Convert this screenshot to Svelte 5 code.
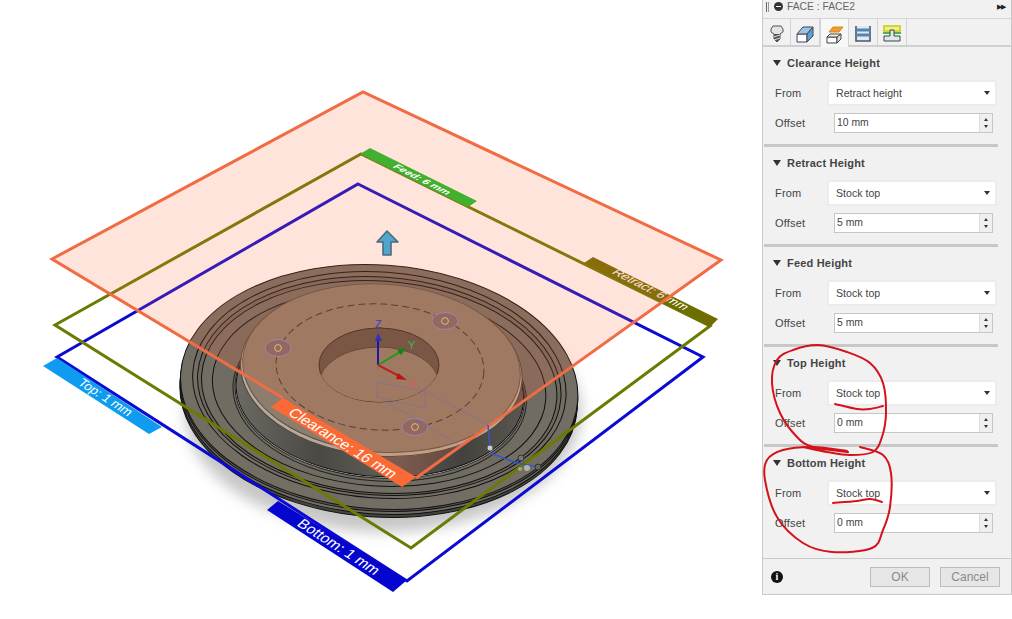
<script lang="ts">
  const sections = [
    { title: 'Clearance Height', from: 'Retract height', offset: '10 mm' },
    { title: 'Retract Height', from: 'Stock top', offset: '5 mm' },
    { title: 'Feed Height', from: 'Stock top', offset: '5 mm' },
    { title: 'Top Height', from: 'Stock top', offset: '0 mm' },
    { title: 'Bottom Height', from: 'Stock top', offset: '0 mm' }
  ]

  // flange + groove ellipses, back to front
  const rings = [
    { cy: 396, rx: 199, ry: 121, fill: '#46443e' },
    { cy: 393, rx: 199, ry: 121, fill: '#6f6c63' },
    { cy: 390, rx: 199, ry: 121, fill: '#5a5750' },
    { cy: 387, rx: 199, ry: 122, fill: '#726e64' },
    { cy: 385, rx: 187, ry: 113, fill: '#726e64' },
    { cy: 386, rx: 182, ry: 109, fill: '#6c685e' },
    { cy: 387, rx: 178, ry: 106, fill: '#726e64' },
    { cy: 388, rx: 167, ry: 98, fill: '#706c62' }
  ]

  const bolts = [
    { x: 278, y: 348 },
    { x: 445, y: 321 },
    { x: 415, y: 427 }
  ]

  // catmull-rom through the hand drawn points
  const smooth = (p: number[][]) => {
    let d = `M${p[0][0]} ${p[0][1]}`
    for (let i = 0; i < p.length - 1; i++) {
      const a = p[i - 1] || p[i]
      const b = p[i]
      const c = p[i + 1]
      const e = p[i + 2] || c
      const c1 = [b[0] + (c[0] - a[0]) / 6, b[1] + (c[1] - a[1]) / 6]
      const c2 = [c[0] - (e[0] - b[0]) / 6, c[1] - (e[1] - b[1]) / 6]
      d += `C${c1[0]} ${c1[1]} ${c2[0]} ${c2[1]} ${c[0]} ${c[1]}`
    }
    return d
  }

  const scribbles = [
    [[848,452],[813,447],[797,437],[780,413],[772,383],[777,360],[793,350],[818,345],[847,352],[870,363],[883,383],[886,413],[882,437],[873,452],[850,455],[827,452],[803,447]],
    [[860,447],[883,455],[891,473],[890,507],[883,530],[872,548],[832,552],[803,543],[777,517],[765,480],[767,460],[783,450],[813,447],[847,451]],
    [[835,404],[857,409],[870,409],[883,406]],
    [[833,503],[857,501],[870,499],[882,502]]
  ].map(smooth)
</script>

<div class="page">
  <svg class="view" viewBox="0 0 762 619" width="762" height="619">
    <defs>
      <filter id="soft" x="-20%" y="-20%" width="140%" height="140%">
        <feGaussianBlur stdDeviation="7" />
      </filter>
      <linearGradient id="neck" x1="0" x2="1" y1="0" y2="0">
        <stop offset="0" stop-color="#6c6a62" />
        <stop offset="0.3" stop-color="#4a4945" />
        <stop offset="0.55" stop-color="#5f5d56" />
        <stop offset="0.8" stop-color="#44423e" />
        <stop offset="1" stop-color="#5a574f" />
      </linearGradient>
      <clipPath id="hole-clip"><ellipse cx="379" cy="365" rx="60" ry="37" /></clipPath>
    </defs>

    <!-- disc -->
    <ellipse cx="383" cy="412" rx="198" ry="120" fill="#c6c6c6" filter="url(#soft)" />
    <g transform="rotate(4 379 390)" stroke="#111" stroke-width="1">
      {#each rings as r}
        <ellipse cx="379" cy={r.cy} rx={r.rx} ry={r.ry} fill={r.fill} />
      {/each}
      <ellipse cx="380" cy="394" rx="147" ry="87" fill="#706c62" stroke="#222" />
      <ellipse cx="380" cy="393" rx="145" ry="85" fill="#d8d4cc" stroke="#222" />
      <ellipse cx="380" cy="392" rx="144" ry="84.5" fill="url(#neck)" />
      <ellipse cx="380" cy="371" rx="141" ry="85" fill="#b5a999" stroke="#4c453b" />
      <ellipse cx="380" cy="368" rx="139" ry="84" fill="#8c7d6c" stroke="#5c5448" />
    </g>

    <ellipse cx="380" cy="367" rx="104" ry="63" transform="rotate(3 380 367)" fill="none" stroke="#3d342c" stroke-width="1" stroke-dasharray="7 4" />

    <ellipse cx="379" cy="365" rx="60" ry="37" fill="#5d5346" stroke="#332a22" />
    <ellipse cx="379" cy="384" rx="60" ry="37" fill="#8c7d6c" stroke="#4a4036" clip-path="url(#hole-clip)" />

    {#each bolts as b}
      <ellipse cx={b.x} cy={b.y} rx="13" ry="8.5" fill="#7a6a68" stroke="#8f8ac4" />
      <circle cx={b.x} cy={b.y} r="3.4" fill="none" stroke="#e6c58c" />
    {/each}

    <!-- bottom plane -->
    <polygon points="358,184 703,357 407,581 57,357" fill="none" stroke="#0a0ad2" stroke-width="3" />
    <polygon points="57,358 43,366 149,434 162,427" fill="#0f9cf0" />
    <text class="tag" transform="matrix(.84 .54 -.72 .68 77 384)" font-size="13">Top: 1 mm</text>
    <polygon points="278,501 267,510 393,592 407,580" fill="#0505d0" />
    <text class="tag" transform="matrix(.84 .54 -.72 .68 296 525)" font-size="15">Bottom: 1 mm</text>

    <!-- middle plane -->
    <polygon points="361,154 710,326 411,548 55,325" fill="none" stroke="#6b7a00" stroke-width="3" />
    <polygon points="593,257 584,263 710,327 718,319" fill="#6e6e00" />
    <text class="tag" transform="matrix(.89 .46 -.8 .5 611 273)" font-size="13">Retract: 6 mm</text>

    <!-- top plane -->
    <polygon points="363,92 721,260 416,478 52,259" fill="#ff6a3d" fill-opacity=".18" />
    <polyline points="283,398 52,259 363,92 721,260 416,478" fill="none" stroke="#f06c44" stroke-width="3" />
    <polygon points="283,398 271,407 402,487 416,477" fill="#fb6a35" />
    <text class="tag" transform="matrix(.85 .53 -.75 .66 287 414)" font-size="15">Clearance: 16 mm</text>

    <polygon points="370,148 360,154 468,207 477,201" fill="#41b02e" />
    <text class="tag bold" transform="matrix(.89 .46 -.8 .4 392 167)" font-size="11">Feed: 6 mm</text>

    <!-- gizmos -->
    <path d="M387 231 L398 242 L391 242 L391 255 L383 255 L383 242 L377 242 Z" fill="#4ea6cc" stroke="#4c6a7a" stroke-width="1.6" stroke-linejoin="round" />

    <g fill="none" stroke="#6468c8" stroke-width="1" opacity=".4">
      <path d="M377 382 L427 392 L488 425" />
      <path d="M377 382 L377 397 L425 408 L425 393" />
      <path d="M383 400 L463 447" />
    </g>
    <path d="M488 425 L490 447 M490 453 L517 463 L538 467" fill="none" stroke="#3a55c8" stroke-width="1.5" />
    <circle cx="490" cy="448" r="3" fill="#ccc" stroke="#555" />
    <circle cx="521" cy="458" r="3" fill="#777" stroke="#333" />
    <circle cx="527" cy="468" r="3" fill="#b5b1a6" />
    <circle cx="520" cy="469" r="2" fill="#a5a196" />
    <circle cx="538" cy="467" r="3" fill="#666" stroke="#333" />

    <g stroke-width="2" fill="none">
      <path d="M378 365 L378 340" stroke="#1a1aa0" />
      <path d="M378 365 L400 352" stroke="#12a012" />
      <path d="M378 365 L401 377" stroke="#c02020" />
    </g>
    <path d="M378 333 L382 341 L375 341 Z" fill="#3030c0" />
    <path d="M406 348 L397 350 L401 355 Z" fill="#0c8a0c" />
    <path d="M407 380 L398 373 L396 379 Z" fill="#b81414" />
    <text class="axis" x="375" y="328" fill="#3c3cc0">Z</text>
    <text class="axis" x="408" y="349" fill="#4cae5c">Y</text>
    <text class="axis" x="409" y="388" fill="#d85a5a">X</text>
  </svg>

  <aside class="panel">
    <header class="title">
      <span class="grip"></span>
      <span class="stop"></span>
      <span class="name">FACE : FACE2</span>
      <span class="more">▶▶</span>
    </header>

    <nav class="tabs">
      <button class="tabbtn" aria-label="Tool">
        <svg viewBox="0 0 14 18" width="14" height="18">
          <path d="M3 1 H11 L13 4 V7 L10 9 V14 L7 17 L4 14 V9 L1 7 V4 Z" fill="#e4e4e4" stroke="#555" stroke-linejoin="round" />
          <path d="M4 9 H10 V14 L7 17 L4 14 Z" fill="#555" />
          <path d="M4 12 L10 10 M4 15 L10 13" stroke="#ddd" />
        </svg>
      </button>
      <button class="tabbtn" aria-label="Geometry">
        <svg viewBox="0 0 18 18" width="18" height="18">
          <path d="M1 9 H11 V17 H1 Z" fill="#fff" stroke="#445" />
          <path d="M1 9 L7 2 H17 L11 9 Z" fill="#9cc4e6" stroke="#445" />
          <path d="M11 9 L17 2 V11 L11 17 Z" fill="#5f9fd2" stroke="#445" />
        </svg>
      </button>
      <button class="tabbtn on" aria-label="Heights">
        <svg viewBox="0 0 18 18" width="18" height="18">
          <path d="M1 11 H11 V17 H1 Z" fill="#fff" stroke="#444" />
          <path d="M1 11 L4 8 H15 L11 11 Z" fill="#f0f0f0" stroke="#444" />
          <path d="M11 11 L15 8 V13 L11 17 Z" fill="#ddd" stroke="#444" />
          <path d="M3 6 L7 1 H17 L13 6 Z" fill="#ef9a32" stroke="#d98a20" />
        </svg>
      </button>
      <button class="tabbtn" aria-label="Passes">
        <svg viewBox="0 0 18 18" width="18" height="18">
          <path d="M2 1 V16 H16 V1" fill="#e4e8ec" stroke="#4a5568" stroke-width="1.6" />
          <path d="M2 5 H16 M2 10 H16" stroke="#4e86b8" stroke-width="3" />
        </svg>
      </button>
      <button class="tabbtn" aria-label="Linking">
        <svg viewBox="0 0 18 18" width="18" height="18">
          <rect x="1" y="1" width="16" height="5" fill="#eef08a" stroke="#d6d23a" stroke-width="2" />
          <path d="M0 8 H18" stroke="#5cae4c" stroke-width="2" />
          <path d="M7 5 H11 V11 H17 V16 H1 V11 H7 Z" fill="#dfe9e6" stroke="#33484e" />
        </svg>
      </button>
      <span class="tabfill"></span>
    </nav>

    {#each sections as s, i}
      <section class="group" class:last={i === sections.length - 1}>
        <h4><span class="caret"></span>{s.title}</h4>
        <div class="row from">
          <label for={`from-${i}`}>From</label>
          <div class="select" id={`from-${i}`}><span>{s.from}</span><i></i></div>
        </div>
        <div class="row">
          <label for={`off-${i}`}>Offset</label>
          <div class="input" id={`off-${i}`}>
            <span>{s.offset}</span>
            <div class="spin"><b></b><b class="down"></b></div>
          </div>
        </div>
      </section>
    {/each}

    <footer class="foot">
      <span class="info">i</span>
      <button class="btn">OK</button>
      <button class="btn">Cancel</button>
    </footer>

    <svg class="marks" viewBox="762 0 250 595" width="250" height="595">
      {#each scribbles as d}
        <path {d} fill="none" stroke="#d4121c" stroke-width="2" stroke-linecap="round" />
      {/each}
    </svg>
  </aside>
</div>

<style>
  :global(body) {
    background: #fff;
    font-family: "Liberation Sans", Arial, sans-serif;
  }

  .page {
    display: flex;
    align-items: flex-start;
    width: 1012px;
    height: 619px;
    overflow: hidden;
  }

  .view {
    display: block;
    flex: none;
  }

  .tag {
    fill: #fff;
    font-family: "Liberation Sans", Arial, sans-serif;
  }

  .bold {
    font-weight: bold;
  }

  .axis {
    font-family: "Liberation Sans", Arial, sans-serif;
    font-size: 11px;
  }

  .panel {
    position: relative;
    flex: none;
    box-sizing: border-box;
    width: 250px;
    height: 595px;
    background: #f1f1f1;
    border: 1px solid #c9c9c9;
    border-top: 0;
    color: #444;
    font-size: 11px;
    display: flex;
    flex-direction: column;
  }

  .title {
    box-sizing: border-box;
    display: flex;
    align-items: center;
    height: 19px;
    padding: 0 4px 5px 0;
    border-bottom: 1px solid #d4d4d4;
    color: #666;
  }

  .grip {
    width: 1px;
    height: 10px;
    margin-left: 3px;
    background: #666;
    box-shadow: 2px 0 0 #999;
  }

  .stop {
    position: relative;
    width: 9px;
    height: 9px;
    margin-left: 7px;
    border-radius: 50%;
    background: #333;
  }

  .stop::after {
    content: "";
    position: absolute;
    left: 2px;
    right: 2px;
    top: 4px;
    height: 1px;
    background: #fff;
  }

  .name {
    margin-left: 4px;
    flex: 1;
    font-size: 10.3px;
  }

  .more {
    color: #222;
    font-size: 7px;
    letter-spacing: -1px;
    margin-right: 2px;
  }

  .tabs {
    box-sizing: border-box;
    display: flex;
    align-items: stretch;
    height: 28px;
    border-bottom: 2px solid #d0d0d0;
  }

  .tabbtn {
    display: flex;
    align-items: center;
    justify-content: center;
    width: 29px;
    padding: 3px 0 0;
    background: #f1f1f1;
    border: 0;
    border-right: 1px solid #d4d4d4;
  }

  .tabbtn:first-child {
    width: 28px;
  }

  .tabbtn.on {
    background: #f8f8f8;
    border-left: 1px solid #d4d4d4;
    margin-bottom: -2px;
  }

  .tabfill {
    flex: 1;
  }

  .group {
    box-sizing: border-box;
    flex: none;
    height: 100px;
    margin: 0 13px 0 1px;
    padding-top: 8px;
    border-bottom: 3px solid #c8c8c8;
  }

  .group.last {
    border-bottom: 0;
  }

  h4 {
    display: flex;
    align-items: center;
    height: 16px;
    margin: 0 0 9px;
    padding-left: 9px;
    font-size: 11px;
    letter-spacing: .2px;
    font-weight: bold;
    color: #444;
  }

  .caret {
    width: 0;
    height: 0;
    margin-right: 6px;
    border-left: 4.5px solid transparent;
    border-right: 4.5px solid transparent;
    border-top: 6px solid #333;
  }

  .row {
    display: flex;
    align-items: center;
    height: 29px;
    padding-left: 11px;
  }

  .row label {
    width: 52px;
    letter-spacing: .2px;
  }

  .from {
    height: 26px;
    margin-bottom: 2px;
  }

  .select {
    box-sizing: border-box;
    display: flex;
    align-items: center;
    justify-content: space-between;
    width: 170px;
    height: 26px;
    padding: 0 5px 0 7px;
    background: #fff;
    border: 2px solid #ececec;
    font-size: 10.6px;
  }

  .select i {
    width: 0;
    height: 0;
    border-left: 3px solid transparent;
    border-right: 3px solid transparent;
    border-top: 4px solid #333;
  }

  .input {
    box-sizing: border-box;
    display: flex;
    align-items: center;
    justify-content: space-between;
    width: 159px;
    height: 20px;
    margin-left: 7px;
    padding-left: 2px;
    background: #fff;
    border: 1px solid #c6c6c6;
    font-size: 10.4px;
  }

  .spin {
    display: flex;
    flex-direction: column;
    align-items: center;
    justify-content: space-evenly;
    width: 12px;
    height: 18px;
    background: #efefef;
    border-left: 1px solid #ddd;
  }

  .spin b {
    width: 0;
    height: 0;
    border-left: 2.5px solid transparent;
    border-right: 2.5px solid transparent;
    border-bottom: 3px solid #333;
  }

  .spin b.down {
    border-bottom: 0;
    border-top: 3px solid #333;
  }

  .foot {
    display: flex;
    align-items: center;
    box-sizing: border-box;
    height: 36px;
    margin-top: auto;
    padding: 0 11px 0 8px;
    border-top: 1px solid #c9c9c9;
  }

  .info {
    width: 12px;
    height: 12px;
    margin-right: auto;
    border-radius: 50%;
    background: #111;
    color: #fff;
    font: bold 10px/12px "Liberation Serif", serif;
    text-align: center;
  }

  .btn {
    box-sizing: border-box;
    width: 60px;
    height: 20px;
    margin-left: 10px;
    padding: 0;
    background: #e6e6e6;
    border: 1px solid #bdbdbd;
    color: #8a8a8a;
    font: 12px "Liberation Sans", Arial, sans-serif;
  }

  .marks {
    position: absolute;
    left: -1px;
    top: 0;
    pointer-events: none;
  }
</style>
